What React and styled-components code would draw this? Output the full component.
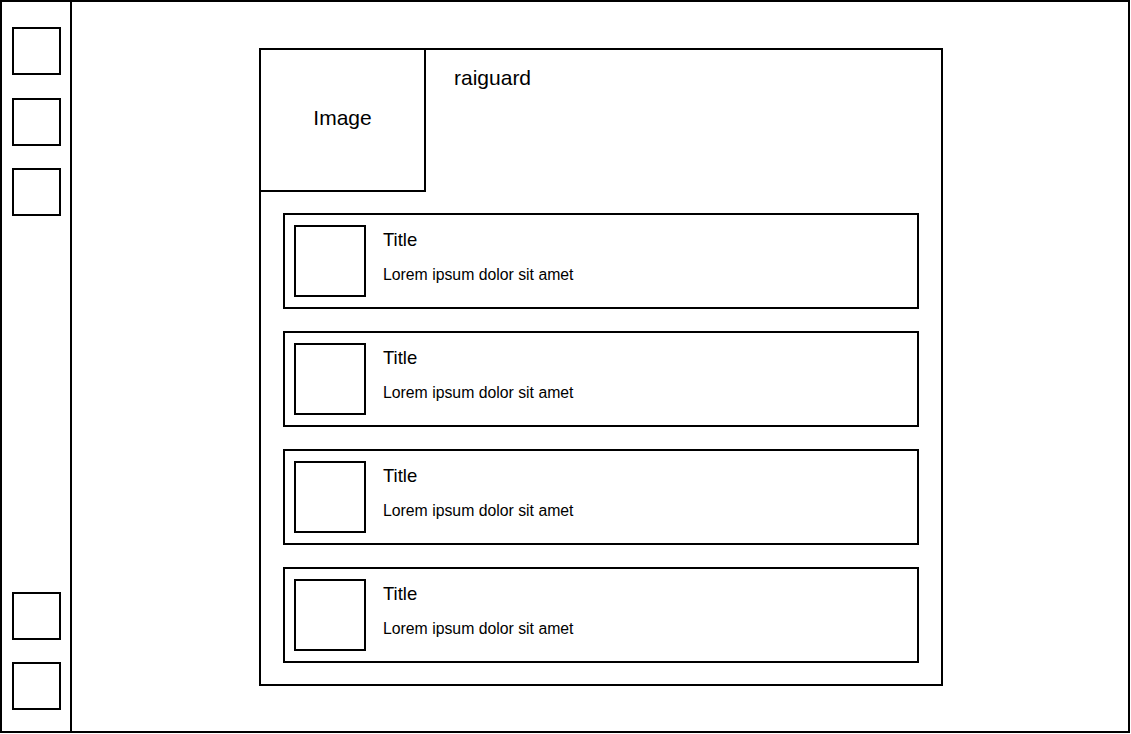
import React from "react";
import styled, { createGlobalStyle } from "styled-components";

const GlobalStyle = createGlobalStyle`
  html, body {
    margin: 0;
    padding: 0;
    background: #ffffff;
  }
  body {
    font-family: "Liberation Sans", Arial, Helvetica, sans-serif;
    color: #000000;
  }
  * {
    box-sizing: border-box;
  }
`;

const Frame = styled.div`
  width: 1130px;
  height: 733px;
  border: 2px solid #000;
  display: flex;
  background: #fff;
`;

const Sidebar = styled.nav`
  width: 70px;
  flex: none;
  border-right: 2px solid #000;
  display: flex;
  flex-direction: column;
  justify-content: space-between;
  padding: 25px 0 21px 10px;
`;

const IconGroup = styled.div`
  display: flex;
  flex-direction: column;
  gap: ${(p) => p.$gap}px;
`;

const NavSquare = styled.div`
  width: 49px;
  height: 48px;
  border: 2px solid #000;
`;

const Main = styled.main`
  flex: 1;
  padding: 46px 0 0 187px;
`;

const Panel = styled.section`
  width: 684px;
  border: 2px solid #000;
  display: flex;
  flex-direction: column;
`;

const Header = styled.header`
  display: flex;
  align-items: flex-start;
`;

const ImageBox = styled.div`
  width: 165px;
  height: 142px;
  border-right: 2px solid #000;
  border-bottom: 2px solid #000;
  display: flex;
  align-items: center;
  justify-content: center;
  padding-bottom: 5px;
  font-size: 21px;
  line-height: 24px;
`;

const UserName = styled.div`
  margin: 16px 0 0 28px;
  font-size: 21px;
  line-height: 24px;
`;

const List = styled.div`
  display: flex;
  flex-direction: column;
  gap: 22px;
  padding: 21px 22px 21px 22px;
`;

const Card = styled.article`
  height: 96px;
  border: 2px solid #000;
  display: flex;
  align-items: center;
  padding-left: 9px;
`;

const Thumb = styled.div`
  width: 72px;
  height: 72px;
  flex: none;
  border: 2px solid #000;
`;

const CardText = styled.div`
  align-self: flex-start;
  margin-left: 17px;
  padding-top: 14px;
  display: flex;
  flex-direction: column;
`;

const CardTitle = styled.div`
  font-size: 18.5px;
  line-height: 22px;
`;

const CardBody = styled.div`
  margin-top: 13.5px;
  font-size: 15.8px;
  line-height: 20px;
`;

const items = [1, 2, 3, 4];

export default function App() {
  return (
    <>
      <GlobalStyle />
      <Frame>
        <Sidebar>
          <IconGroup $gap={22.5}>
            <NavSquare />
            <NavSquare />
            <NavSquare />
          </IconGroup>
          <IconGroup $gap={22}>
            <NavSquare />
            <NavSquare />
          </IconGroup>
        </Sidebar>
        <Main>
          <Panel>
            <Header>
              <ImageBox>Image</ImageBox>
              <UserName>raiguard</UserName>
            </Header>
            <List>
              {items.map((i) => (
                <Card key={i}>
                  <Thumb />
                  <CardText>
                    <CardTitle>Title</CardTitle>
                    <CardBody>Lorem ipsum dolor sit amet</CardBody>
                  </CardText>
                </Card>
              ))}
            </List>
          </Panel>
        </Main>
      </Frame>
    </>
  );
}
